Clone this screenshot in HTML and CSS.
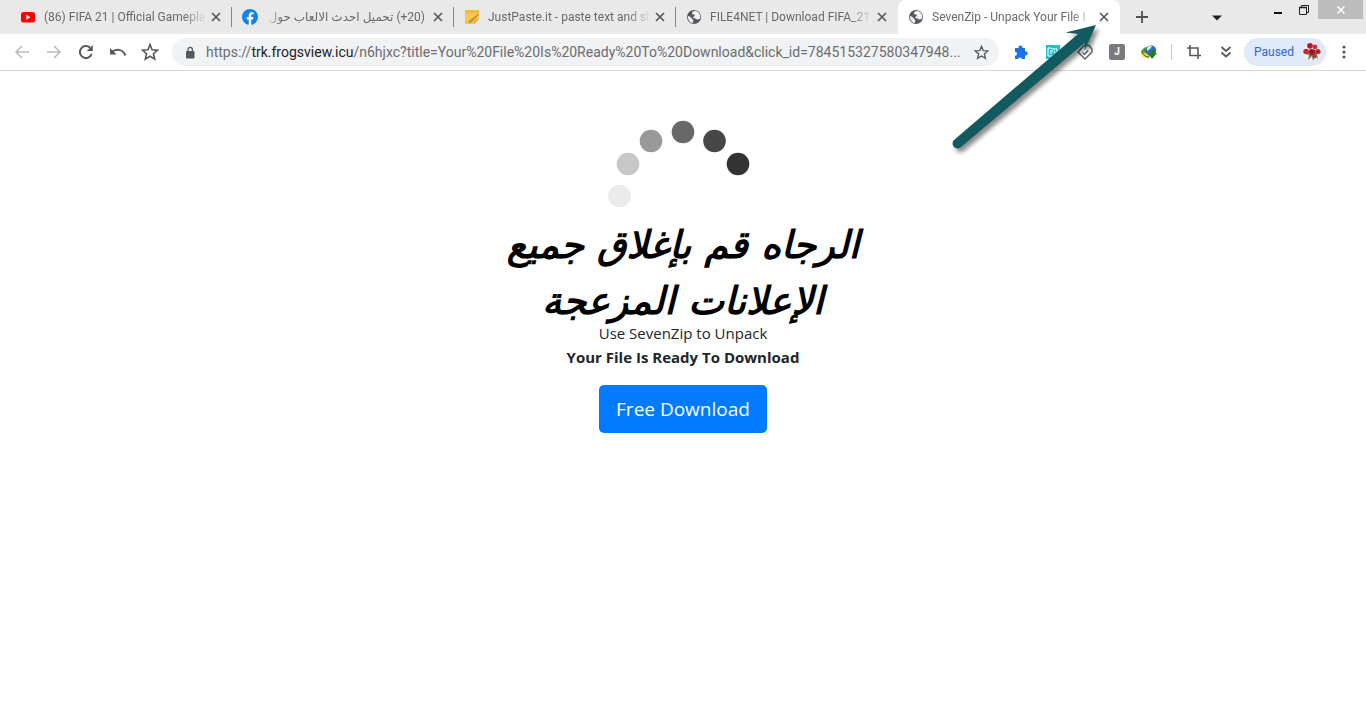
FILE: index.html
```html
<!DOCTYPE html>
<html lang="en">
<head>
<meta charset="utf-8">
<title>SevenZip - Unpack Your File Is Ready</title>
<link rel="stylesheet" href="styles.css">
</head>
<body>
<svg class="defs" aria-hidden="true">
  <symbol id="close" viewBox="0 0 10 10"><path d="M1 1l8 8M9 1L1 9" fill="none" stroke="#55585c" stroke-width="1.7"/></symbol>
  <symbol id="globe" viewBox="0 0 16 16"><circle cx="8" cy="8" r="7" fill="#55585d"/><path d="M9.500 1.800C7 2 5.500 3.500 6.200 5c.6 1 2.300.2 2.600 1.400.3 1.200-1.800.9-1.800 2.100 0 1 2.500.4 3.300 1.500.7 1 2.300.4 3.800-.3.500-3.900-.7-6.700-4.600-7.900zM2 7c1.500.3 3 1.300 3.700 2.400.7 1.200 1.900 1 1.600 2.400-.2.900-.3 1.400-.7 2.300C3.500 13.300 1.600 10.500 2 7z" fill="#f1f1f1"/></symbol>
  <symbol id="star" viewBox="0 0 18 18"><path d="M9 1.600l2.100 5.100 5.500.4-4.200 3.600 1.300 5.400L9 13.200l-4.700 2.900 1.300-5.400L1.400 7.100l5.500-.4z" fill="none" stroke="#55585d" stroke-width="1.6"/></symbol>
</svg>

<header class="browser">
  <div class="tab-strip">
    <nav class="tabs">
      <div class="tab">
        <svg class="favicon" viewBox="0 0 16 16"><rect x="1" y="3" width="14" height="10.500" rx="2.500" fill="#f00"/><path d="M6.300 5.700v5l4.200-2.500z" fill="#fff"/></svg>
        <span class="title">(86) FIFA 21 | Official Gamepla</span>
        <button class="close" aria-label="Close tab"><svg><use href="#close"/></svg></button>
      </div>
      <div class="tab">
        <svg class="favicon" viewBox="0 0 16 16"><circle cx="8" cy="8" r="8" fill="#1382ee"/><path d="M6.800 16v-5.600h-2V8.100h2V6.400c0-2.100 1.200-3.200 3-3.200.9 0 1.700.1 1.700.1v2h-1c-1 0-1.300.6-1.300 1.200v1.600h2.200l-.4 2.300H9.200V16z" fill="#fff"/></svg>
        <span class="title rtl" dir="rtl">(20+) تحميل احدث الالعاب حول</span>
        <button class="close" aria-label="Close tab"><svg><use href="#close"/></svg></button>
      </div>
      <div class="tab">
        <svg class="favicon" viewBox="0 0 16 16"><path d="M1 1h14v9l-5 5H1z" fill="#f7ca45"/><path d="M1 1h14v3H1z" fill="#f0bb37"/><path d="M15 10l-5 5v-4z" fill="#e9a92b"/><path d="M15 5l-8 8-2 .8.700-2z" fill="#e9953c" stroke="#9d7754" stroke-width=".7"/></svg>
        <span class="title">JustPaste.it - paste text and sh</span>
        <button class="close" aria-label="Close tab"><svg><use href="#close"/></svg></button>
      </div>
      <div class="tab">
        <svg class="favicon"><use href="#globe"/></svg>
        <span class="title">FILE4NET | Download FIFA_21</span>
        <button class="close" aria-label="Close tab"><svg><use href="#close"/></svg></button>
      </div>
      <div class="tab active">
        <svg class="favicon"><use href="#globe"/></svg>
        <span class="title">SevenZip - Unpack Your File I</span>
        <button class="close" aria-label="Close tab"><svg><use href="#close"/></svg></button>
      </div>
    </nav>
    <button class="new-tab" aria-label="New tab"><svg width="12" height="12" viewBox="0 0 12 12"><path d="M6 0v12M0 6h12" stroke="#4d5054" stroke-width="1.800"/></svg></button>
    <button class="tab-search" aria-label="Search tabs"><svg width="10" height="6" viewBox="0 0 10 6"><path d="M0 .5h10L5 5.500z" fill="#222"/></svg></button>
    <div class="window-controls">
      <button aria-label="Minimize"><svg width="10" height="12" viewBox="0 0 10 12"><path d="M1 9h8" stroke="#111" stroke-width="2"/></svg></button>
      <button aria-label="Restore"><svg width="10" height="10" viewBox="0 0 10 10"><path d="M.5 2.500h7v7h-7zM2.500 2.500v-2h7v7h-2" fill="none" stroke="#222"/><path d="M0 2.500h8" stroke="#222" stroke-width="1.500"/></svg></button>
      <button class="window-close" aria-label="Close"><svg width="8" height="8" viewBox="0 0 8 8"><path d="M.5.5l7 7M7.500.5l-7 7" stroke="#fff" stroke-width="1.500"/></svg></button>
    </div>
  </div>

  <div class="toolbar">
    <div class="nav-buttons">
      <button aria-label="Back"><svg width="16" height="16" viewBox="0 0 16 16"><path d="M15 8H2M8 2L2 8l6 6" fill="none" stroke="#b9bbbe" stroke-width="1.500"/></svg></button>
      <button aria-label="Forward"><svg width="16" height="16" viewBox="0 0 16 16"><path d="M1 8h13M8 2l6 6-6 6" fill="none" stroke="#b9bbbe" stroke-width="1.500"/></svg></button>
      <button aria-label="Reload"><svg width="16" height="16" viewBox="0 0 16 16"><path d="M13.600 10a6 6 0 1 1-1.500-6.200" fill="none" stroke="#55585d" stroke-width="2"/><path d="M14.800 1v6H8.800z" fill="#55585d"/></svg></button>
      <button aria-label="Undo"><svg width="18" height="16" viewBox="0 0 18 16"><path d="M2.500 8.500C6.500 4.500 13.500 4.500 16.500 11.500" fill="none" stroke="#55585d" stroke-width="2"/><path d="M1 4v6.500h6.500z" fill="#55585d"/></svg></button>
      <button aria-label="Bookmarks"><svg width="18" height="18"><use href="#star"/></svg></button>
    </div>
    <div class="address">
      <svg class="lock" width="10" height="13" viewBox="0 0 10 13"><rect x="1" y="5" width="8.500" height="7.500" rx="1" fill="#55585d"/><path d="M3 5.500V3.500a2.200 2.200 0 0 1 4.400 0v2" fill="none" stroke="#55585d" stroke-width="1.300"/></svg>
      <a class="url" href="#">https://<b>trk.frogsview.icu</b>/n6hjxc?title=Your%20File%20Is%20Ready%20To%20Download&amp;click_id=784515327580347948...</a>
      <button aria-label="Bookmark this page"><svg width="15" height="15"><use href="#star"/></svg></button>
    </div>
    <div class="extensions">
      <button aria-label="Extensions"><svg width="16" height="16" viewBox="0 0 16 16"><path d="M2 4h3.600a2 2 0 1 1 3.800 0H12v3.400a2.100 2.100 0 1 1 0 4V15H8.900a1.900 1.900 0 0 0-3.700 0H2v-3.200a2 2 0 0 0 0-4z" fill="#1a73e8"/></svg></button>
      <button aria-label="Translate"><svg width="16" height="16" viewBox="0 0 16 16"><rect x="1" y="1" width="14" height="14" fill="#21c0cf"/><path d="M3 4h3l1 1h5v7H3z" fill="none" stroke="#fff"/><path d="M5 7h3M5 9h2M9 7l2 4" stroke="#fff"/></svg></button>
      <button aria-label="Coupons"><svg width="18" height="18" viewBox="0 0 18 18"><path d="M2 9l6-6.500h5L16 6v3l-7 7z" fill="none" stroke="#66696c" stroke-width="1.500" stroke-linejoin="round"/><path d="M6.500 9.500l2 2L12 7.500" fill="none" stroke="#66696c" stroke-width="1.500"/></svg></button>
      <button aria-label="J extension" class="letter"><span>J</span></button>
      <button aria-label="Download manager"><svg width="18" height="16" viewBox="0 0 18 16"><ellipse cx="7" cy="9" rx="6" ry="5" fill="#e8c234"/><path d="M1 8c1-3 3-5 7-5l-2 6z" fill="#56a54c"/><path d="M2 11c3 4 7 3 9 2L6 9z" fill="#f0d348"/><circle cx="11" cy="6.500" r="5.200" fill="#2772bd"/><path d="M7 4c1-2 4-3 5-2L10 5 7 7z" fill="#e4ead7"/><path d="M8 9h3V6h4v3h2l-5 6z" fill="#267b2c"/><path d="M2 7c1 4 4 6 7 6M4 5l3 4" fill="none" stroke="#41501f"/></svg></button>
    </div>
    <span class="divider"></span>
    <div class="tools">
      <button aria-label="Capture"><svg width="16" height="16" viewBox="0 0 16 16"><path d="M4 1v10.500h11M1 4h11v11" fill="none" stroke="#55585d" stroke-width="1.600"/></svg></button>
      <button aria-label="More extensions"><svg width="12" height="14" viewBox="0 0 12 14"><path d="M1.500 2L6 6l4.500-4M1.500 7.500l4.500 4 4.500-4" fill="none" stroke="#55585d" stroke-width="1.700"/></svg></button>
    </div>
    <button class="profile"><span>Paused</span>
      <svg width="20" height="20" viewBox="0 0 20 20"><circle cx="10" cy="10" r="9" fill="#f3f1ee"/><path d="M4 12l3 1-1 5 4-4 1 5 2-5 3 3-1-5 2-3-9-2z" fill="#68765a"/><circle cx="8" cy="3.800" r="2.900" fill="#bc1b28"/><circle cx="13" cy="5" r="2.400" fill="#d12e39"/><circle cx="4" cy="9.500" r="2.700" fill="#d32636"/><circle cx="10" cy="10" r="3" fill="#a91525"/><circle cx="16" cy="9.500" r="2.600" fill="#c42432"/><circle cx="12.500" cy="14.500" r="2" fill="#bd3340"/><path d="M7 4l2-1M9 10l2-1M4 9l1-1M15 9l2 1" stroke="#65111b"/></svg>
    </button>
    <button class="menu" aria-label="Menu"><svg width="4" height="14" viewBox="0 0 4 14"><circle cx="2" cy="2" r="1.600" fill="#55585d"/><circle cx="2" cy="7" r="1.600" fill="#55585d"/><circle cx="2" cy="12" r="1.600" fill="#55585d"/></svg></button>
  </div>
  <svg class="arrow" width="160" height="140" viewBox="0 0 160 140" aria-hidden="true"><path d="M4 120L128 14 115.500 12.500 146 5 134.700 30.500 134.500 23 11 127A4.600 4.600 0 0 1 4 120z" fill="#115a60"/></svg>
</header>

<main class="page">
  <svg class="spinner" width="150" height="100" viewBox="0 0 150 100" role="img" aria-label="Loading">
    <circle cx="11.500" cy="85" r="11.300" fill="#ebebeb"/><circle cx="20" cy="53" r="11.300" fill="#c7c7c7"/><circle cx="43" cy="30" r="11.300" fill="#999"/><circle cx="75" cy="21" r="11.300" fill="#686868"/><circle cx="106.500" cy="30" r="11.300" fill="#474747"/><circle cx="130" cy="53" r="11.300" fill="#333"/>
  </svg>
  <h1 class="notice" lang="ar" dir="rtl">الرجاه قم بإغلاق جميع<br>الإعلانات المزعجة</h1>
  <p class="line">Use SevenZip to Unpack</p>
  <p class="line strong">Your File Is Ready To Download</p>
  <button class="download">Free Download</button>
</main>
</body>
</html>
```
FILE: styles.css
```css
* { box-sizing: border-box; }
body { margin: 0; background: #fff; color: #212529; font-family: "Open Sans", "Noto Sans", "DejaVu Sans", sans-serif; }
button { display: inline-flex; align-items: center; justify-content: center; padding: 0; border: 0; background: none; font: inherit; color: inherit; }
svg { display: block; flex: none; }
.defs { position: absolute; width: 0; height: 0; }

.browser { position: relative; border-bottom: 1px solid #d5d6d8; font-family: Roboto, "DejaVu Sans", sans-serif; }
.tab-strip { display: flex; height: 34px; padding-left: 10px; background: #e9e9e9; }
.tabs { display: flex; flex: 0 1 1110px; min-width: 0; }
.tab { display: flex; flex: 1 1 0; align-items: center; min-width: 0; padding: 0 10px; border-right: 1px solid transparent; font-size: 12px; line-height: 34px; color: #66696d; }
.tab:nth-child(-n+3) { border-image: linear-gradient(transparent 8px, #85878a 8px, #85878a 26px, transparent 26px) 1; border-width: 0 1px 0 0; }
.tab.active { background: #fff; border-radius: 8px 8px 0 0; }
.favicon { width: 16px; height: 16px; margin-right: 8px; }
.title { flex: 1; min-width: 0; overflow: hidden; white-space: nowrap; mask-image: linear-gradient(to left, transparent, #000 24px); }
.title.rtl { padding-right: 4px; mask-image: linear-gradient(to right, transparent, #000 16px); }
.close { width: 10px; height: 16px; margin-left: 4px; }
.close svg { width: 10px; height: 10px; }
.new-tab { width: 24px; margin-left: 10px; }
.tab-search { width: 24px; margin: 2px 0 0 51px; }
.window-controls { display: flex; align-items: flex-start; margin-left: auto; }
.window-controls button { width: 26px; height: 19px; }
.window-controls .window-close { width: 45px; margin: 0 3px 0 1px; background: #bcbcbc; }

.toolbar { display: flex; align-items: center; height: 36px; padding: 0 14px 0 6px; }
.nav-buttons, .extensions, .tools { display: flex; align-items: center; }
.nav-buttons button, .extensions button, .tools button { width: 32px; height: 28px; }
.address { display: flex; flex: 1; align-items: center; min-width: 0; height: 28px; margin: 0 6px; padding: 0 10px 0 13px; border-radius: 14px; background: #f1f2f3; }
.url { flex: 1; min-width: 0; margin-left: 11px; overflow: hidden; white-space: nowrap; font-size: 14px; color: #6a6d71; text-decoration: none; }
.url b { font-weight: 400; color: #202124; }
.letter span { width: 16px; height: 16px; border-radius: 2px; background: #7b7b7b; color: #fff; font-size: 10px; font-weight: 700; line-height: 16px; }
.divider { width: 1px; height: 16px; margin: 0 6px; background: #c9cacc; }
.profile { gap: 8px; height: 28px; margin-left: 2px; padding: 0 4px 0 10px; border-radius: 14px; background: #dfe9f9; font-size: 12px; color: #3267cc; }
.menu { width: 16px; height: 28px; margin-left: 10px; }
.arrow { position: absolute; left: 950px; top: 20px; filter: drop-shadow(3px 4px 2px rgba(0, 0, 0, .45)); }

.page { display: flex; flex-direction: column; align-items: center; padding: 40px 16px; }
.notice { margin: 6px 0 0; font-family: "DejaVu Sans", sans-serif; font-size: 38px; font-style: italic; font-weight: 700; line-height: 56px; text-align: center; color: #000; }
.line { margin: 0; font-size: 15px; line-height: 24px; }
.notice + .line { margin-top: -8px; }
.line.strong { font-weight: 700; }
.download { height: 48px; margin-top: 16px; padding: 0 17px; border-radius: 5px; background: #007bff; color: #fff; font-size: 19px; }
```
